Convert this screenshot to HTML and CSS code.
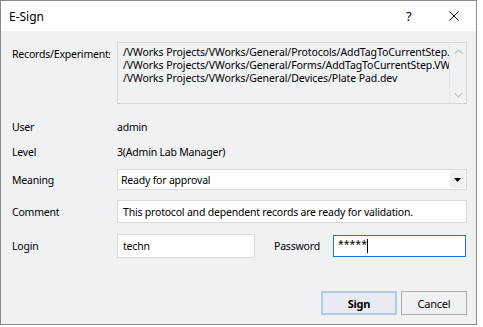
FILE: index.html
```html
<!DOCTYPE html>
<html>
<head>
<meta charset="utf-8">
<link rel="stylesheet" href="styles.css">
</head>
<body>
<div class="dialog">
  <div class="titlebar">
    <span class="title">E-Sign</span>
    <span class="help">?</span>
    <span class="close">
      <svg width="10" height="10" viewBox="0 0 10 10"><path d="M0.5 0.5 L9.5 9.5 M9.5 0.5 L0.5 9.5" stroke="#000" stroke-width="1" fill="none"/></svg>
    </span>
  </div>
  <div class="content">
    <div class="row row-records">
      <div class="label clip">Records/Experiments</div>
      <div class="records">
        <div class="records-text">/VWorks Projects/VWorks/General/Protocols/AddTagToCurrentStep.pro
/VWorks Projects/VWorks/General/Forms/AddTagToCurrentStep.VWForm
/VWorks Projects/VWorks/General/Devices/Plate Pad.dev</div>
        <div class="vscroll">
          <svg width="9" height="6" viewBox="0 0 9 6"><path d="M0.5 5 L4.5 1 L8.5 5" stroke="#c4c6c9" stroke-width="1.2" fill="none"/></svg>
          <svg width="9" height="6" viewBox="0 0 9 6"><path d="M0.5 1 L4.5 5 L8.5 1" stroke="#c4c6c9" stroke-width="1.2" fill="none"/></svg>
        </div>
      </div>
    </div>
    <div class="row row-user">
      <div class="label">User</div>
      <div class="value">admin</div>
    </div>
    <div class="row row-level">
      <div class="label">Level</div>
      <div class="value">3(Admin Lab Manager)</div>
    </div>
    <div class="row row-meaning">
      <div class="label">Meaning</div>
      <div class="combo">
        <span class="combo-text">Ready for approval</span>
        <span class="combo-btn"><svg width="7" height="4" viewBox="0 0 7 4"><path d="M0 0 H7 L3.5 4 Z" fill="#000"/></svg></span>
      </div>
    </div>
    <div class="row row-comment">
      <div class="label">Comment</div>
      <div class="input comment">This protocol and dependent records are ready for validation.</div>
    </div>
    <div class="row row-login">
      <div class="label">Login</div>
      <div class="input login">techn</div>
      <div class="pw-label">Password</div>
      <div class="input password focused"><span class="stars">*****</span><span class="caret"></span></div>
    </div>
    <div class="buttons">
      <button class="btn default">Sign</button>
      <button class="btn">Cancel</button>
    </div>
  </div>
</div>
</body>
</html>
```

FILE: styles.css
```css
html, body {
  margin: 0;
  padding: 0;
  background: #ffffff;
}
body {
  width: 483px;
  height: 327px;
  overflow: hidden;
  font-family: "Noto Sans", "Open Sans", sans-serif;
  font-size: 10.5px;
  letter-spacing: -0.2px;
  color: #000;
}
.dialog {
  width: 475px;
  height: 323px;
  border: 1px solid #8a8a8a;
  background: #f0f1f3;
  display: flex;
  flex-direction: column;
}
.titlebar {
  height: 30px;
  background: #ffffff;
  display: flex;
  align-items: center;
  flex-shrink: 0;
}
.title {
  font-size: 12px;
  letter-spacing: 0;
  margin-left: 8px;
  flex: 1;
}
.help {
  font-size: 13px;
  letter-spacing: 0;
  width: 12px;
  margin-right: 31px;
}
.close {
  display: flex;
  margin-right: 17px;
}
.content {
  display: flex;
  flex-direction: column;
  padding: 0 9px 0 11px;
}
.row {
  display: flex;
  align-items: center;
}
.label {
  width: 105px;
  flex-shrink: 0;
  white-space: nowrap;
}
.clip {
  width: 98px;
  margin-right: 7px;
  overflow: hidden;
}
.row-records {
  margin-top: 11px;
  height: 62px;
  align-items: flex-start;
}
.row-records .label {
  margin-top: 5px;
}
.records {
  flex: 1;
  height: 60px;
  border: 1px solid #d6d7d9;
  background: #f0f1f3;
  display: flex;
  overflow: hidden;
}
.records-text {
  flex: 1;
  overflow: hidden;
  white-space: pre;
  line-height: 13px;
  letter-spacing: -0.08px;
  padding: 3px 0 0 5px;
}
.vscroll {
  width: 17px;
  flex-shrink: 0;
  border-left: 1px solid #e6e7e9;
  display: flex;
  flex-direction: column;
  justify-content: space-between;
  align-items: center;
  padding: 6px 0 5px;
  box-sizing: border-box;
}
.row-user {
  margin-top: 15px;
  height: 16px;
}
.row-level {
  margin-top: 9px;
  height: 16px;
}
.row-meaning {
  margin-top: 9px;
  height: 21px;
}
.combo {
  flex: 1;
  height: 19px;
  border: 1px solid #d9dadc;
  background: #fff;
  display: flex;
  align-items: center;
}
.combo-text {
  flex: 1;
  padding-left: 3px;
}
.combo-btn {
  width: 15px;
  height: 17px;
  margin-right: 1px;
  background: #f0f1f3;
  display: flex;
  align-items: center;
  justify-content: center;
}
.row-comment {
  margin-top: 10px;
  height: 23px;
}
.input {
  height: 21px;
  border: 1px solid #d9dadc;
  background: #fff;
  display: flex;
  align-items: center;
  padding-left: 5px;
  box-sizing: content-box;
  white-space: nowrap;
}
.comment {
  flex: 1;
}
.row-login {
  margin-top: 11px;
  height: 24px;
}
.login {
  width: 131px;
  height: 22px;
}
.pw-label {
  margin-left: 19px;
  width: 59px;
}
.password {
  width: 127px;
  height: 20px;
  border-color: #1c74d2;
  padding-left: 4px;
}
.stars {
  letter-spacing: 0;
  position: relative;
  top: -2px;
}
.caret {
  display: inline-block;
  width: 1px;
  height: 14px;
  background: #000;
  margin-left: 0;
}
.buttons {
  margin-top: 33px;
  display: flex;
  justify-content: flex-end;
  gap: 4px;
  padding-right: 0;
}
.btn {
  font-family: inherit;
  font-size: 11px;
  letter-spacing: -0.2px;
  color: #000;
  width: 66px;
  height: 24px;
  border: 1px solid #adadad;
  background: #f0f1f3;
  padding: 0;
  margin: 0;
}
.btn.default {
  width: 76px;
  border: 2px solid #b3c8e3;
  background: #e8ecf2;
  font-weight: bold;
}
```
